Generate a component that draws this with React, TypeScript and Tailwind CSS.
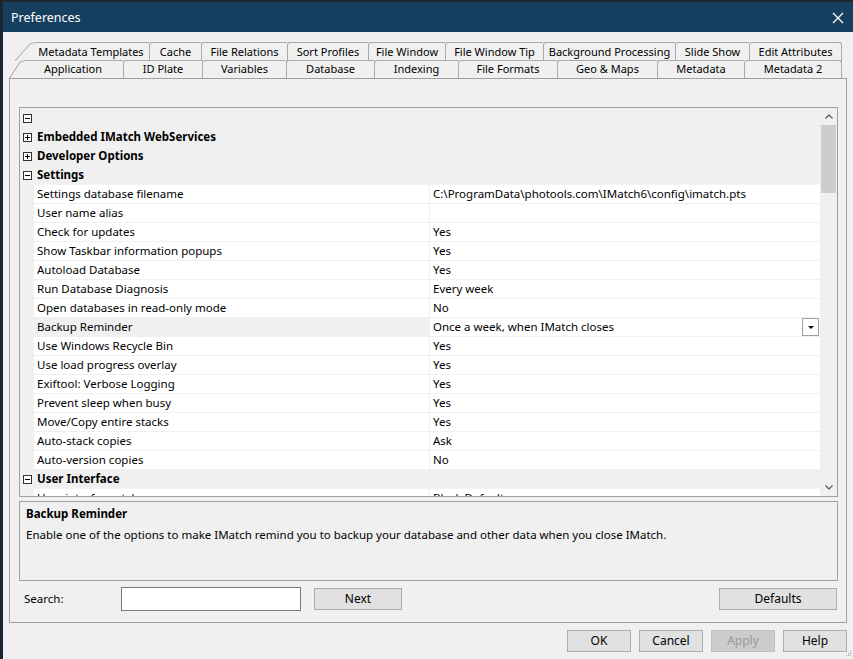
import React from 'react';

type GridRow =
  | { kind: 'cat'; label: string; open: boolean }
  | { kind: 'item'; label: string; value: string; selected?: boolean };

const BACK_TABS = [
  { label: 'Metadata Templates', w: 116 },
  { label: 'Cache', w: 52 },
  { label: 'File Relations', w: 86 },
  { label: 'Sort Profiles', w: 81 },
  { label: 'File Window', w: 77 },
  { label: 'File Window Tip', w: 98 },
  { label: 'Background Processing', w: 132 },
  { label: 'Slide Show', w: 74 },
  { label: 'Edit Attributes', w: 93 },
];

const FRONT_TABS = [
  { label: 'Application', w: 100 },
  { label: 'ID Plate', w: 79 },
  { label: 'Variables', w: 84 },
  { label: 'Database', w: 88 },
  { label: 'Indexing', w: 84 },
  { label: 'File Formats', w: 99 },
  { label: 'Geo & Maps', w: 100 },
  { label: 'Metadata', w: 87 },
  { label: 'Metadata 2', w: 98 },
];

const ROWS: GridRow[] = [
  { kind: 'cat', label: '', open: true },
  { kind: 'cat', label: 'Embedded IMatch WebServices', open: false },
  { kind: 'cat', label: 'Developer Options', open: false },
  { kind: 'cat', label: 'Settings', open: true },
  { kind: 'item', label: 'Settings database filename', value: 'C:\\ProgramData\\photools.com\\IMatch6\\config\\imatch.pts' },
  { kind: 'item', label: 'User name alias', value: '' },
  { kind: 'item', label: 'Check for updates', value: 'Yes' },
  { kind: 'item', label: 'Show Taskbar information popups', value: 'Yes' },
  { kind: 'item', label: 'Autoload Database', value: 'Yes' },
  { kind: 'item', label: 'Run Database Diagnosis', value: 'Every week' },
  { kind: 'item', label: 'Open databases in read-only mode', value: 'No' },
  { kind: 'item', label: 'Backup Reminder', value: 'Once a week, when IMatch closes', selected: true },
  { kind: 'item', label: 'Use Windows Recycle Bin', value: 'Yes' },
  { kind: 'item', label: 'Use load progress overlay', value: 'Yes' },
  { kind: 'item', label: 'Exiftool: Verbose Logging', value: 'Yes' },
  { kind: 'item', label: 'Prevent sleep when busy', value: 'Yes' },
  { kind: 'item', label: 'Move/Copy entire stacks', value: 'Yes' },
  { kind: 'item', label: 'Auto-stack copies', value: 'Ask' },
  { kind: 'item', label: 'Auto-version copies', value: 'No' },
  { kind: 'cat', label: 'User Interface', open: true },
  { kind: 'item', label: 'User interface style', value: 'Black Default' },
];

function ToggleBox({ open }: { open: boolean }) {
  return (
    <svg width="9" height="9" viewBox="0 0 9 9" className="shrink-0">
      <rect x="0.5" y="0.5" width="8" height="8" fill="white" stroke="#333" />
      <line x1="2" y1="4.5" x2="7" y2="4.5" stroke="#000" />
      {!open && <line x1="4.5" y1="2" x2="4.5" y2="7" stroke="#000" />}
    </svg>
  );
}

function Slant({ w }: { w: number }) {
  return (
    <svg width={w} height="19" viewBox={`0 0 ${w} 19`} className="shrink-0">
      <path d={`M0 19 L${w - 3} 2 Q${w - 1} 1 ${w} 1`} fill="#f0f0f0" stroke="#a0a0a0" />
    </svg>
  );
}

function Button({ label, w, disabled }: { label: string; w: string; disabled?: boolean }) {
  return (
    <button
      className={
        disabled
          ? `${w} h-[22px] bg-[#cccccc] border border-[#bfbfbf] text-[#9a9a9a] text-[12px]`
          : `${w} h-[22px] bg-[#e1e1e1] border border-[#adadad] text-black text-[12px]`
      }
    >
      {label}
    </button>
  );
}

export default function App() {
  return (
    <div className="w-[853px] h-[659px] bg-[#1b2530] flex font-['Noto_Sans',sans-serif] overflow-hidden">
      <div className="relative ml-[3px] mt-[2px] w-[850px] h-[657px] flex flex-col bg-[#f0f0f0]">
        {/* title bar */}
        <div className="h-[30px] bg-[#163f5f] flex items-center pt-[2px] pl-[8px] pr-[8px] text-white">
          <span className="text-[12.5px]">Preferences</span>
          <svg width="12" height="12" viewBox="0 0 12 12" className="ml-auto mr-[1px]">
            <path d="M1 1 L11 11 M11 1 L1 11" stroke="#fff" strokeWidth="1.3" />
          </svg>
        </div>

        <div className="flex-1 flex flex-col px-[6px] pt-[10px]">
          {/* tab rows */}
          <div className="flex h-[19px] ml-[6px] text-[11px] text-black">
            <Slant w={18} />
            {BACK_TABS.map((t, i) => (
              <div
                key={t.label}
                style={{ width: t.w }}
                className={`shrink-0 flex items-center justify-center whitespace-nowrap border-t border-l border-[#a9a9a9] rounded-tl-[3px] ${
                  i === 0 ? 'border-l-0' : ''
                } ${i === BACK_TABS.length - 1 ? 'border-r rounded-tr-[3px]' : ''}`}
              >
                {t.label}
              </div>
            ))}
          </div>
          <div className="flex h-[18px] -mt-[1px] text-[11px] text-black relative">
            <Slant w={14} />
            {FRONT_TABS.map((t, i) => (
              <div
                key={t.label}
                style={{ width: t.w }}
                className={`shrink-0 flex items-center justify-center whitespace-nowrap bg-[#f0f0f0] border-t border-l border-[#a9a9a9] rounded-tl-[3px] ${
                  i === 0 ? 'border-l-0' : ''
                } ${i === FRONT_TABS.length - 1 ? 'border-r rounded-tr-[3px]' : ''}`}
              >
                {t.label}
              </div>
            ))}
          </div>

          {/* panel */}
          <div className="w-[838px] h-[545px] border border-[#a0a0a0] flex flex-col pt-[28px] pl-[9px]">
            {/* property grid */}
            <div className="w-[819px] h-[390px] border border-[#a0a0a0] flex bg-[#f0f0f0]">
              <div className="flex-1 overflow-hidden pt-[1px] text-[11.5px] text-black">
                {ROWS.map((r, i) =>
                  r.kind === 'cat' ? (
                    <div key={i} className="h-[19px] flex items-center bg-[#f0f0f0] border-b border-[#f4f4f4]">
                      <div className="w-[14px] flex justify-center pl-[1px]">
                        <ToggleBox open={r.open} />
                      </div>
                      <span className="pl-[3px] font-bold text-[11.5px]">{r.label}</span>
                    </div>
                  ) : (
                    <div key={i} className="h-[19px] flex">
                      <div className="w-[14px] shrink-0 bg-[#f0f0f0]" />
                      <div
                        className={`w-[395px] shrink-0 flex items-center pl-[3px] border-b border-[#f0f0f0] ${
                          r.selected ? 'bg-[#f0f0f0]' : 'bg-white'
                        }`}
                      >
                        {r.label}
                      </div>
                      <div className="w-[1px] bg-[#f0f0f0]" />
                      <div className="flex-1 flex items-center pl-[3px] bg-white border-b border-[#f0f0f0]">
                        <span>{r.value}</span>
                        {r.selected && (
                          <div className="ml-auto mr-[1px] w-[17px] h-[18px] border border-[#a0a0a0] bg-white flex items-center justify-center">
                            <svg width="6" height="3" viewBox="0 0 6 3">
                              <path d="M0 0 H6 L3 3 Z" fill="#000" />
                            </svg>
                          </div>
                        )}
                      </div>
                    </div>
                  ),
                )}
              </div>
              {/* scrollbar */}
              <div className="w-[17px] shrink-0 flex flex-col items-center bg-[#f0f0f0]">
                <div className="h-[17px] flex items-center justify-center">
                  <svg width="8" height="5" viewBox="0 0 8 5">
                    <path d="M0.5 4.5 L4 1 L7.5 4.5" fill="none" stroke="#606060" strokeWidth="1.3" />
                  </svg>
                </div>
                <div className="w-[15px] h-[68px] bg-[#cdcdcd]" />
                <div className="mt-auto h-[17px] flex items-center justify-center">
                  <svg width="8" height="5" viewBox="0 0 8 5">
                    <path d="M0.5 0.5 L4 4 L7.5 0.5" fill="none" stroke="#606060" strokeWidth="1.3" />
                  </svg>
                </div>
              </div>
            </div>

            {/* description */}
            <div className="w-[819px] h-[80px] mt-[4px] border border-[#a0a0a0] px-[6px] pt-[2px] text-black">
              <div className="text-[11.5px] font-bold leading-[19px]">Backup Reminder</div>
              <div className="text-[11.5px] mt-[2px] leading-[19px]">
                Enable one of the options to make IMatch remind you to backup your database and other data when you close IMatch.
              </div>
            </div>

            {/* search row */}
            <div className="w-[819px] h-[24px] mt-[6px] flex items-center text-[11.5px] text-black">
              <span className="pl-[5px] w-[102px]">Search:</span>
              <input className="w-[180px] h-[24px] bg-white border border-[#7a7a7a] outline-none" />
              <div className="ml-[13px]">
                <Button label="Next" w="w-[88px]" />
              </div>
              <div className="ml-auto mr-[1px]">
                <Button label="Defaults" w="w-[118px]" />
              </div>
            </div>
          </div>

          {/* dialog buttons */}
          <div className="flex justify-end gap-[8px] mt-[7px]">
            <Button label="OK" w="w-[64px]" />
            <Button label="Cancel" w="w-[64px]" />
            <Button label="Apply" w="w-[64px]" disabled />
            <Button label="Help" w="w-[64px]" />
          </div>
        </div>

        {/* size grip */}
        <svg width="7" height="7" viewBox="0 0 7 7" className="absolute right-[1px] bottom-[1px]">
          <rect x="5" y="0" width="1" height="1" fill="#a0a0a0" />
          <rect x="3" y="2" width="1" height="1" fill="#a0a0a0" />
          <rect x="5" y="2" width="1" height="1" fill="#a0a0a0" />
          <rect x="1" y="4" width="1" height="1" fill="#a0a0a0" />
          <rect x="3" y="4" width="1" height="1" fill="#a0a0a0" />
          <rect x="5" y="4" width="1" height="1" fill="#a0a0a0" />
        </svg>
      </div>
    </div>
  );
}
